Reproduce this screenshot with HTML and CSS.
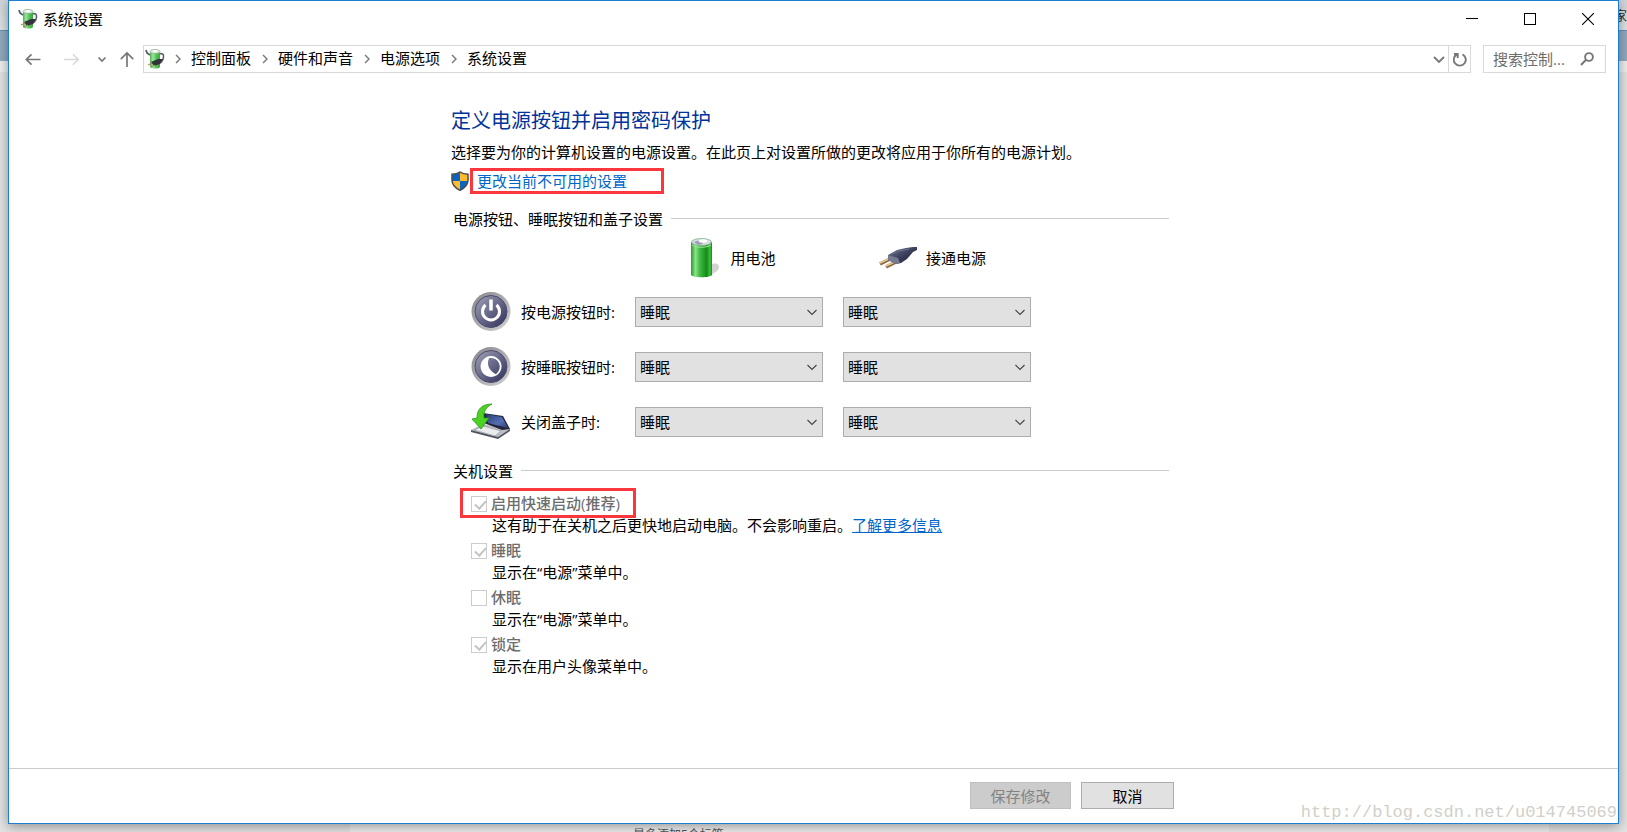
FILE: index.html
```html
<!DOCTYPE html>
<html lang="zh-CN">

<head>
    <meta charset="UTF-8">
    <meta name="viewport" content="width=device-width, initial-scale=1.0">
    <title>系统设置</title>
    <link rel="stylesheet" href="styles.css">
</head>

<body>

    <!-- 窗口后面的网页 -->
    <div class="backdrop">
        <div class="backdrop-top">家</div>
        <div class="backdrop-nav"></div>
        <div class="backdrop-gap"></div>
        <div class="backdrop-page">
            <div class="backdrop-panel"><span>最多添加5个标签</span></div>
        </div>
    </div>

    <!-- 公用图标 -->
    <svg class="defs" width="0" height="0" aria-hidden="true">
        <defs>
            <linearGradient id="green" x1="0" x2="1" y1="0" y2="0">
                <stop offset="0" stop-color="#2c9a2c"/>
                <stop offset=".22" stop-color="#8be48b"/>
                <stop offset=".4" stop-color="#45bd45"/>
                <stop offset=".75" stop-color="#128c17"/>
                <stop offset=".9" stop-color="#3fc13f"/>
                <stop offset="1" stop-color="#1b7f1d"/>
            </linearGradient>
            <linearGradient id="greenSmall" x1="0" x2="1" y1="0" y2="0">
                <stop offset="0" stop-color="#4fae52"/>
                <stop offset=".3" stop-color="#9be89b"/>
                <stop offset=".6" stop-color="#55c658"/>
                <stop offset="1" stop-color="#3da441"/>
            </linearGradient>
            <linearGradient id="ring" x1="0" x2="1" y1="0" y2="1">
                <stop offset="0" stop-color="#85858a"/>
                <stop offset="1" stop-color="#d2d2d4"/>
            </linearGradient>
            <linearGradient id="knob" x1="0" x2="1" y1="0" y2="1">
                <stop offset="0" stop-color="#a3a3b6"/>
                <stop offset=".5" stop-color="#67678a"/>
                <stop offset="1" stop-color="#2f2f58"/>
            </linearGradient>
            <linearGradient id="screen" x1="0" x2="1" y1="0" y2="1">
                <stop offset="0" stop-color="#27397a"/>
                <stop offset=".6" stop-color="#5570b4"/>
                <stop offset="1" stop-color="#2b3d78"/>
            </linearGradient>
            <linearGradient id="plugBody" x1="0" x2="1" y1="0" y2="1">
                <stop offset="0" stop-color="#777c94"/>
                <stop offset=".5" stop-color="#3c405c"/>
                <stop offset="1" stop-color="#191b33"/>
            </linearGradient>
            <symbol id="power" viewBox="0 0 20 20">
                <path d="M14 5c3-1 5 0 4.500 3-.3 3-1.500 5-3.500 6" fill="none" stroke="#5b6070" stroke-width="1.600"/>
                <path d="M1 1l1 3 3 2" fill="none" stroke="#585e6d" stroke-width="1.800"/>
                <path d="M5 3v15c1 2 9 2 10 0V3z" fill="url(#greenSmall)"/>
                <ellipse cx="10" cy="2.500" rx="5" ry="2" fill="#e4e9ea" stroke="#79ab7c" stroke-width=".7"/>
                <ellipse cx="10" cy="2" rx="2.300" ry="1" fill="#fff"/>
                <path d="M6 13l7-3 5 0-3 5-6 2z" fill="#34323c"/>
                <path d="M7 14l-4 2M10 16l-4 2" stroke="#ad8c62" stroke-width="1.200"/>
            </symbol>
            <symbol id="chev" viewBox="0 0 10 10">
                <path d="M3 1l4 4-4 4" fill="none" stroke="#767676" stroke-width="1.400"/>
            </symbol>
            <symbol id="down" viewBox="0 0 10 10">
                <path d="M.5 3l4.500 4.500L9.500 3" fill="none" stroke="#444" stroke-width="1.100"/>
            </symbol>
        </defs>
    </svg>

    <div class="window">

        <header class="titlebar">
            <svg class="icon-app"><use href="#power"/></svg>
            <h1>系统设置</h1>
            <div class="controls">
                <button type="button" aria-label="最小化"><svg width="12" height="12"><path d="M0 5.500h12" stroke="#000"/></svg></button>
                <button type="button" aria-label="最大化"><svg width="12" height="12"><rect x=".5" y=".5" width="11" height="11" fill="none" stroke="#000"/></svg></button>
                <button type="button" aria-label="关闭"><svg width="12" height="12"><path d="M0 0l12 12M12 0L0 12" stroke="#000" stroke-width="1.100"/></svg></button>
            </div>
        </header>

        <nav class="navbar">
            <button type="button" class="nav-back" aria-label="后退"><svg width="16" height="16" viewBox="0 0 16 16"><path d="M15.500 8.500H1.500M6.500 3.300L1.300 8.500l5.200 5.200" fill="none" stroke="#777" stroke-width="1.700"/></svg></button>
            <button type="button" class="nav-forward" aria-label="前进"><svg width="16" height="16" viewBox="0 0 16 16"><path d="M0 8.500h14M9 3.300l5.200 5.200L9 13.700" fill="none" stroke="#d8d8d8" stroke-width="1.500"/></svg></button>
            <button type="button" class="nav-recent" aria-label="最近浏览的位置"><svg width="10" height="10" viewBox="0 0 10 10"><path d="M1.500 3.500L5 7l3.500-3.500" fill="none" stroke="#777" stroke-width="1.700"/></svg></button>
            <button type="button" class="nav-up" aria-label="上移"><svg width="16" height="16" viewBox="0 0 16 16"><path d="M8 16V2M1.800 8.200L8 2l6.200 6.200" fill="none" stroke="#777" stroke-width="1.700"/></svg></button>

            <div class="address">
                <svg class="icon-app"><use href="#power"/></svg>
                <svg class="crumb-sep"><use href="#chev"/></svg>
                <a href="#">控制面板</a>
                <svg class="crumb-sep"><use href="#chev"/></svg>
                <a href="#">硬件和声音</a>
                <svg class="crumb-sep"><use href="#chev"/></svg>
                <a href="#">电源选项</a>
                <svg class="crumb-sep"><use href="#chev"/></svg>
                <a href="#">系统设置</a>
                <button type="button" class="address-drop" aria-label="以前的位置"><svg width="12" height="12" viewBox="0 0 12 12"><path d="M1 4l5 5 5-5" fill="none" stroke="#777" stroke-width="1.800"/></svg></button>
                <button type="button" class="refresh" aria-label="刷新"><svg width="14" height="16" viewBox="0 0 14 16"><path d="M9.500 3.300A6 6 0 1 1 3.500 3.600M1 3h3.700v4" fill="none" stroke="#777" stroke-width="1.900"/></svg></button>
            </div>

            <div class="search">
                <input type="text" placeholder="搜索控制..." aria-label="搜索控制面板">
                <svg width="14" height="14" viewBox="0 0 14 14"><circle cx="9" cy="5" r="3.900" fill="none" stroke="#777" stroke-width="1.900"/><path d="M6 7.800L1 13" stroke="#777" stroke-width="2"/></svg>
            </div>
        </nav>

        <main class="content">
            <h2>定义电源按钮并启用密码保护</h2>
            <p class="desc">选择要为你的计算机设置的电源设置。在此页上对设置所做的更改将应用于你所有的电源计划。</p>

            <div class="admin">
                <svg width="18" height="20" viewBox="0 0 18 20">
                    <path d="M9 1c2 1.500 5 2.300 8 2.300V9c0 5-3 8-8 10.300C4 17 1 14 1 9V3.300C4 3.300 7 2.500 9 1z" fill="#fdbb2d"/>
                    <path d="M9 1v9H1V3.300C4 3.300 7 2.500 9 1zM9 10h8c-.5 4.500-3.500 7.300-8 9.300z" fill="#0a64c4"/>
                    <path d="M9 1c2 1.500 5 2.300 8 2.300V9c0 5-3 8-8 10.300C4 17 1 14 1 9V3.300C4 3.300 7 2.500 9 1z" fill="none" stroke="#4c4c4c" stroke-width="1.500"/>
                </svg>
                <a href="#" class="marked">更改当前不可用的设置</a>
            </div>

            <h3>电源按钮、睡眠按钮和盖子设置</h3>

            <div class="power-grid">
                <div class="source source-battery">
                    <svg width="40" height="40" viewBox="0 0 40 40">
                        <path d="M28 27c6-3 9-1 9 2s-4 7-11 8z" fill="#d2d2d2"/>
                        <path d="M9 4v33c2 3 19 3 21 0V4z" fill="url(#green)"/>
                        <path d="M10 7c4 3 15 3 19 0" fill="none" stroke="#a3e7a3"/>
                        <ellipse cx="19.500" cy="4" rx="10" ry="3.500" fill="#d5dbe3" stroke="#7fb883" stroke-width=".8"/>
                        <path d="M12 4l6-2 3 4-5 1z" fill="#9a9eb4"/>
                        <ellipse cx="21" cy="3" rx="4.500" ry="1.700" fill="#fff"/>
                    </svg>
                    <span>用电池</span>
                </div>
                <div class="source source-plug">
                    <svg width="40" height="40" viewBox="0 0 40 40">
                        <path d="M12 21L2 26M18 24L8 29" stroke="#8d6b45" stroke-width="3.500"/>
                        <path d="M12 20.300L2 25M18 23.300L8 28" stroke="#e5c692" stroke-width="1.500"/>
                        <path d="M10 17l9-5 9-2 7-1h4v3l-4 2-6 7-6 4-5 1-8-4z" fill="url(#plugBody)"/>
                        <path d="M10 17l10 3 2 5-4 1-8-4z" fill="#777b90"/>
                        <path d="M13 16l8-3 10-2" fill="none" stroke="#6f748e"/>
                    </svg>
                    <span>接通电源</span>
                </div>

                <div class="event">
                    <svg width="40" height="40" viewBox="0 0 40 40">
                        <circle cx="20" cy="19.500" r="19.500" fill="url(#ring)"/>
                        <circle cx="20" cy="19.500" r="16" fill="url(#knob)" stroke="#4b4b6e"/>
                        <path d="M14.500 13a8.500 8.500 0 1 0 11 0" fill="none" stroke="#fff" stroke-width="3"/>
                        <path d="M20 7.500v11" stroke="#fff" stroke-width="3.500"/>
                    </svg>
                    <label for="power-battery">按电源按钮时:</label>
                </div>
                <div class="select"><select id="power-battery"><option>睡眠</option></select><svg><use href="#down"/></svg></div>
                <div class="select"><select aria-label="按电源按钮时 接通电源"><option>睡眠</option></select><svg><use href="#down"/></svg></div>

                <div class="event">
                    <svg width="40" height="40" viewBox="0 0 40 40">
                        <circle cx="20" cy="19.500" r="19.500" fill="url(#ring)"/>
                        <circle cx="20" cy="19.500" r="16" fill="url(#knob)" stroke="#4b4b6e"/>
                        <path fill-rule="evenodd" d="M20 9a10.500 10.500 0 1 0 .1 0zM18 11.200c9-2 15 9 7 16-6-3-10-9-7-16z" fill="#fff"/>
                    </svg>
                    <label for="sleep-battery">按睡眠按钮时:</label>
                </div>
                <div class="select"><select id="sleep-battery"><option>睡眠</option></select><svg><use href="#down"/></svg></div>
                <div class="select"><select aria-label="按睡眠按钮时 接通电源"><option>睡眠</option></select><svg><use href="#down"/></svg></div>

                <div class="event">
                    <svg width="40" height="40" viewBox="0 0 40 40">
                        <path d="M0 28l12-6 27 5-12 9z" fill="#b9bdc4"/>
                        <path d="M0 28l27 7 12-8v2l-12 8L0 30z" fill="#50545e"/>
                        <path d="M3 28l9-4 18 5-6 5z" fill="#e9ebed" stroke="#9fa3aa" stroke-width=".8"/>
                        <path d="M12 11l20 3 7 13-8 1-18-7z" fill="#22263a"/>
                        <path d="M15 12l16 3 6 11-20-5z" fill="url(#screen)"/>
                        <path d="M21 2C11 2 6 7 6 16l-5 1 9 10 8-11-5 0c-1-6 2-11 8-14z" fill="#4cd322" stroke="#31931c" stroke-width=".8"/>
                    </svg>
                    <label for="lid-battery">关闭盖子时:</label>
                </div>
                <div class="select"><select id="lid-battery"><option>睡眠</option></select><svg><use href="#down"/></svg></div>
                <div class="select"><select aria-label="关闭盖子时 接通电源"><option>睡眠</option></select><svg><use href="#down"/></svg></div>
            </div>

            <h3>关机设置</h3>

            <div class="options">
                <div class="option">
                    <label class="boxed"><input type="checkbox" checked disabled>启用快速启动(推荐)</label>
                    <p>这有助于在关机之后更快地启动电脑。不会影响重启。<a href="#">了解更多信息</a></p>
                </div>
                <div class="option">
                    <label><input type="checkbox" checked disabled>睡眠</label>
                    <p>显示在“电源”菜单中。</p>
                </div>
                <div class="option">
                    <label><input type="checkbox" disabled>休眠</label>
                    <p>显示在“电源”菜单中。</p>
                </div>
                <div class="option">
                    <label><input type="checkbox" checked disabled>锁定</label>
                    <p>显示在用户头像菜单中。</p>
                </div>
            </div>
        </main>

        <footer class="footer">
            <div class="footer-inner">
                <button type="button" class="save" disabled>保存修改</button>
                <button type="button" class="cancel">取消</button>
            </div>
        </footer>

    </div>

    <div class="watermark">http://blog.csdn.net/u014745069</div>

</body>

</html>
```

FILE: styles.css
```css
* {
    margin: 0;
    padding: 0;
    box-sizing: border-box;
}

body {
    position: relative;
    display: flex;
    min-height: 100vh;
    padding: 0 8px 8px;
    overflow: hidden;
    font-family: "Open Sans", "Noto Sans CJK SC", sans-serif;
    font-size: 15px;
    line-height: 22px;
    color: #000;
}

button,
input,
select {
    font: inherit;
}

button {
    border: none;
    background: none;
}

a {
    color: #0066cc;
    text-decoration: none;
}

.defs {
    position: absolute;
}

/* 背景网页 */
.backdrop {
    position: absolute;
    inset: 0;
    display: flex;
    flex-direction: column;
    overflow: hidden;
    background-color: #e4e4e4;
}

.backdrop-top {
    height: 31px;
    padding-top: 4px;
    border-bottom: 1px solid #6b93b5;
    background: linear-gradient(#d0d5d9, #e2e6e9);
    font-size: 13px;
    color: #333;
    text-align: right;
}

.backdrop-nav {
    height: 30px;
    background-color: #93abc0;
}

.backdrop-gap {
    height: 11px;
    background-color: #f0f0f0;
}

.backdrop-page {
    flex: 1;
    display: flex;
    padding: 0 78px 0 350px;
}

.backdrop-panel {
    flex: 1;
    display: flex;
    align-items: flex-end;
    padding-left: 283px;
    background-color: #efefef;
    font-size: 12px;
    line-height: 18px;
    color: #555;
}

.backdrop-panel span {
    margin-bottom: -12px;
}

/* 窗口 */
.window {
    position: relative;
    flex: 1;
    display: flex;
    flex-direction: column;
    border: 1px solid #1c7ed1;
    background-color: #fff;
    box-shadow: 0 2px 12px rgba(0, 0, 0, .4);
}

.titlebar {
    display: flex;
    align-items: center;
    height: 36px;
    padding: 0 1px 0 9px;
}

.titlebar h1 {
    margin-left: 5px;
    font-size: 15px;
    font-weight: normal;
}

.icon-app {
    width: 20px;
    height: 20px;
}

.controls {
    display: flex;
    margin-left: auto;
}

.controls button {
    display: flex;
    align-items: center;
    justify-content: center;
    width: 58px;
    height: 36px;
}

/* 地址栏 */
.navbar {
    display: flex;
    height: 28px;
    margin-top: 8px;
    padding: 0 12px 0 4px;
}

.navbar button {
    display: flex;
    align-items: center;
    justify-content: center;
}

.nav-back {
    width: 40px;
}

.nav-forward {
    width: 38px;
}

.nav-recent {
    width: 22px;
}

.nav-up {
    width: 28px;
}

.address {
    flex: 1;
    display: flex;
    align-items: center;
    margin-left: 2px;
    border: 1px solid #d9d9d9;
}

.address .icon-app {
    margin-left: 1px;
    margin-right: -1px;
}

.address a {
    padding-bottom: 2px;
    color: #000;
}

.crumb-sep {
    width: 10px;
    height: 10px;
    margin: 0 8px 0 9px;
}

.address-drop {
    width: 18px;
    margin-left: auto;
}

.refresh {
    width: 22px;
    height: 26px;
}

.address .refresh {
    border-left: 1px solid #d9d9d9;
}

.search {
    display: flex;
    align-items: center;
    width: 123px;
    margin-left: 12px;
    padding: 0 11px 0 9px;
    border: 1px solid #d9d9d9;
}

.search input {
    flex: 1;
    min-width: 0;
    border: none;
    outline: none;
    background: none;
}

.search input::placeholder {
    color: #6d6d6d;
}

/* 内容 */
.content {
    flex: 1;
    width: 100%;
    max-width: 725px;
    margin: 0 auto;
    padding: 34px 7px 0 0;
}

.content h2 {
    font-size: 20px;
    font-weight: normal;
    line-height: 28px;
    color: #003399;
}

.desc {
    margin-top: 6px;
}

.admin {
    display: flex;
    align-items: center;
    gap: 1px;
    margin: 5px 0 15px;
}

.marked {
    width: 194px;
    padding: 0 4px;
    border: 3px solid #fa373c;
    line-height: 20px;
}

.content h3 {
    display: flex;
    align-items: center;
    gap: 8px;
    padding: 0 0 2px 2px;
    font-size: 15px;
    font-weight: normal;
    line-height: 20px;
}

.content h3::after {
    content: "";
    flex: 1;
    height: 1px;
    margin-bottom: 1px;
    background-color: #ccc;
}

.power-grid {
    display: grid;
    grid-template-columns: 144px 188px 188px;
    gap: 15px 20px;
    align-items: center;
    margin: 8px 0 19px;
    padding-left: 20px;
}

.source {
    display: flex;
    align-items: center;
    justify-content: center;
    gap: 8px;
    height: 38px;
}

.source-battery {
    grid-column: 2;
}

.source-plug {
    padding-right: 10px;
}

.event {
    display: flex;
    align-items: center;
    gap: 10px;
    white-space: nowrap;
}

.select {
    position: relative;
}

.select select {
    display: block;
    width: 100%;
    height: 30px;
    padding: 0 24px 0 4px;
    border: 1px solid #adadad;
    border-radius: 0;
    background-color: #e1e1e1;
    color: #000;
    appearance: none;
}

.select svg {
    position: absolute;
    top: 10px;
    right: 6px;
    width: 10px;
    height: 10px;
    pointer-events: none;
}

.options {
    display: grid;
    gap: 4px;
    margin-top: 10px;
    padding-left: 20px;
    line-height: 21px;
}

.option label {
    position: relative;
    display: flex;
    align-items: center;
    gap: 4px;
    width: fit-content;
    margin-bottom: 1px;
    font-weight: 500;
    color: #6d6d6d;
}

.option input {
    position: relative;
    width: 16px;
    height: 16px;
    border: 1px solid #ccc;
    background-color: #fff;
    appearance: none;
}

.option input:checked::after {
    content: "";
    position: absolute;
    top: 1px;
    left: 5px;
    width: 5px;
    height: 9px;
    border: solid #c4c4c4;
    border-width: 0 2px 2px 0;
    transform: rotate(42deg);
}

.option p {
    padding-left: 21px;
}

.option p a {
    text-decoration: underline;
}

/* 红框标注 */
.boxed::before {
    content: "";
    position: absolute;
    inset: -5px -16px -4px -11px;
    border: 3px solid #fa373c;
}

/* 底部按钮 */
.footer {
    padding: 13px 0 14px;
    border-top: 1px solid #ccc;
}

.footer-inner {
    display: flex;
    justify-content: flex-end;
    gap: 10px;
    max-width: 725px;
    margin: 0 auto;
    padding-right: 2px;
}

.footer button {
    height: 27px;
    border: 1px solid #adadad;
    background-color: #e1e1e1;
    color: #000;
}

.footer .save {
    width: 101px;
    border-color: #bfbfbf;
    background-color: #ccc;
    color: #838383;
}

.footer .cancel {
    width: 93px;
}

.watermark {
    position: absolute;
    right: 10px;
    bottom: 8px;
    font-family: "Liberation Mono", monospace;
    font-size: 17px;
    color: #d0d0ca;
}
```
